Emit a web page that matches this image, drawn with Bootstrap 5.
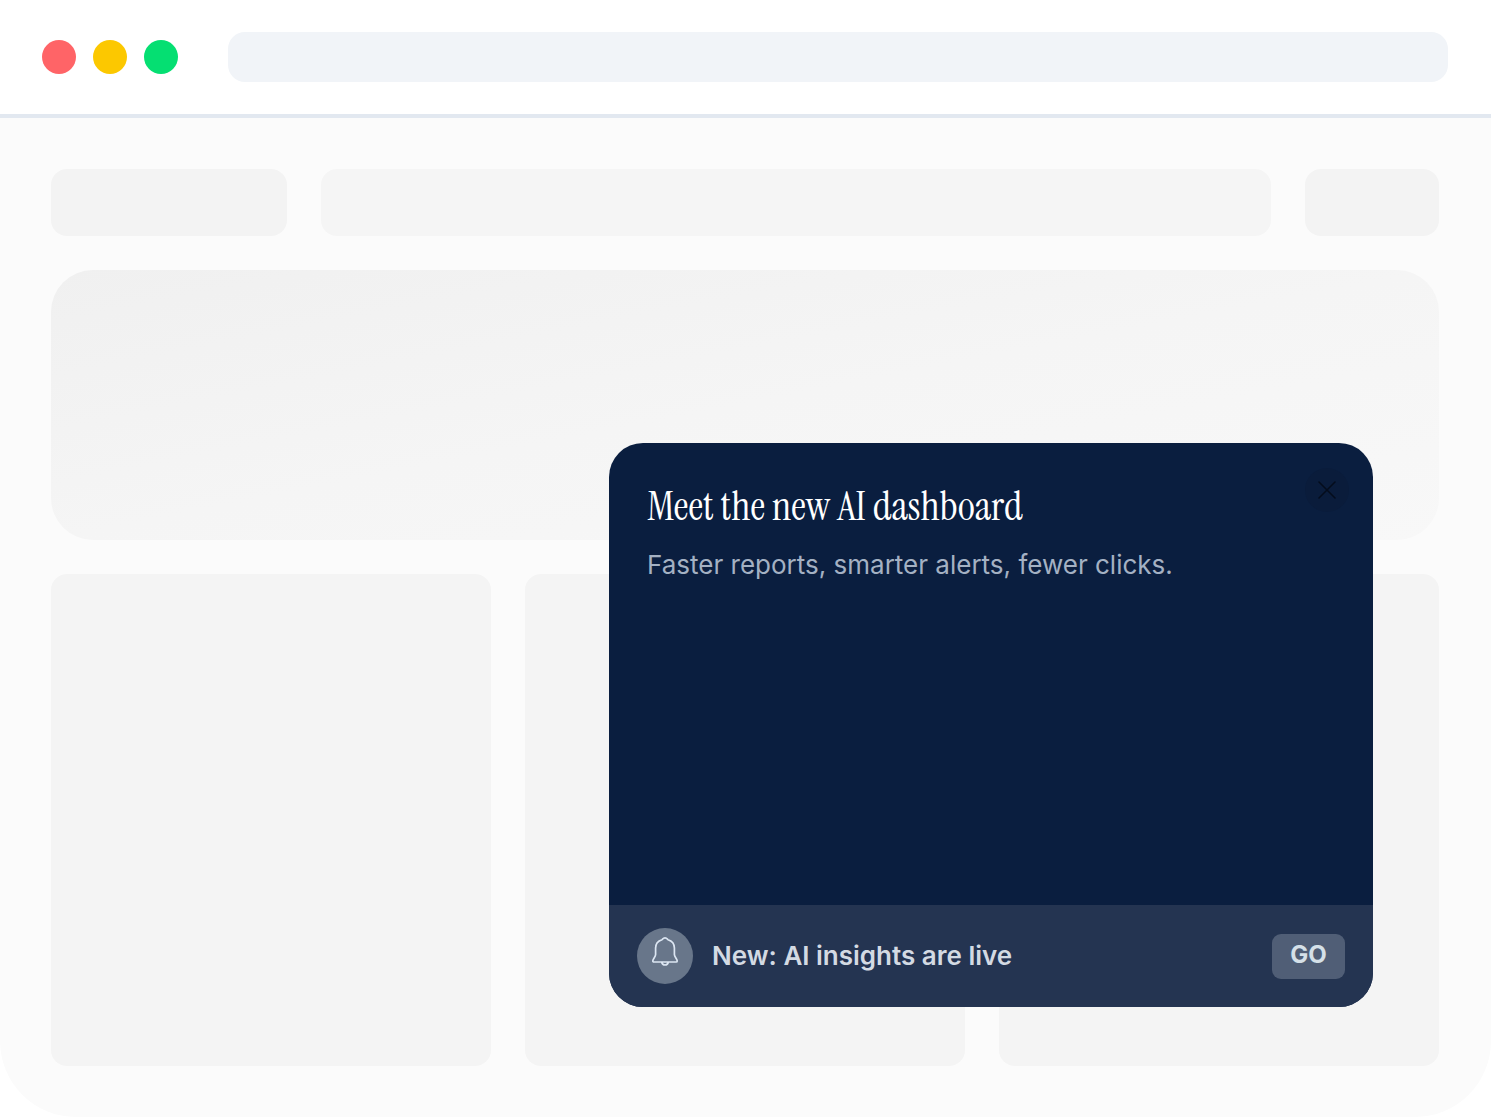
<!DOCTYPE html>
<html lang="en">
<head>
<meta charset="utf-8">
<meta name="viewport" content="width=device-width, initial-scale=1">
<title>AI dashboard announcement</title>
<link href="https://cdn.jsdelivr.net/npm/bootstrap@5.3.0/dist/css/bootstrap.min.css" rel="stylesheet">
<style>
body { font-family: Inter, "Liberation Sans", sans-serif; background: #fff; }
.browser { background: #fbfbfb; border-radius: 0 0 76px 76px; }
.browser-bar { background: #fff; border-bottom: 4px solid #e2e8f0; padding: 32px 43px 32px 42px; gap: 50px; }
.dots { gap: 17px; }
.dot { width: 34px; height: 34px; }
.dot-red { background: #ff6467; }
.dot-yellow { background: #fcc800; }
.dot-green { background: #05df72; }
.address { height: 50px; border: 0; border-radius: 17px; background: #f1f4f8; padding: 0 20px; outline-offset: 2px; }
.page-area { padding: 51px 52px 51px 51px; gap: 34px; }
.skeleton-row { gap: 34px; }
.block { border-radius: 16px; background: #f5f5f5; }
.block-bar { height: 67px; }
.block-logo { width: 236px; background: #f3f3f3; }
.block-action { width: 134px; background: #f3f3f3; }
.block-hero { height: 270px; border-radius: 42px; background: linear-gradient(to bottom right, #f0f0f0, #f5f5f5 50%, #f8f8f8); }
.block-tile { height: 492px; background: #f4f4f4; }
.popup { right: 118px; bottom: 110px; width: 764px; max-width: 90%; height: 564px; border-radius: 34px; background: #0a1e3f; }
.popup-head { padding: 25px 24px 0 38px; }
.popup-title { margin: 16px 0 0; font: 400 41px/44px "Instrument Serif", "Liberation Serif", serif; color: #fff; }
.popup-text { margin: 20px 0 0; font-size: 26px; line-height: 34px; color: #a4b1c3; }
.popup-close { width: 44px; height: 44px; background: #0a1c3b; color: #040c1c; border: 0; }
.popup-foot { background: #243451; padding: 0 28px; height: 102px; gap: 19px; }
.bell { width: 56px; height: 56px; background: #68768a; color: #dce6f2; padding-bottom: 8px; }
.foot-text { font-size: 26px; line-height: 32px; font-weight: 600; color: #d3dae3; }
.go { width: 73px; height: 45px; padding: 0 0 3px; border: 0; border-radius: 9px; background: #505e76; color: #d5e0e8; font-size: 24px; line-height: 32px; font-weight: 700; }
.go:hover { background: #61708a; color: #fff; }
</style>
<script src="https://cdn.jsdelivr.net/npm/bootstrap@5.3.0/dist/js/bootstrap.bundle.min.js"></script>
</head>
<body>
<div class="browser position-relative overflow-hidden">
  <header class="browser-bar d-flex align-items-center">
    <div class="dots d-flex flex-shrink-0">
      <span class="dot dot-red rounded-circle"></span>
      <span class="dot dot-yellow rounded-circle"></span>
      <span class="dot dot-green rounded-circle"></span>
    </div>
    <input class="address flex-grow-1 w-100" type="text" aria-label="Address">
  </header>
  <main class="page-area d-flex flex-column">
    <div class="skeleton-row d-flex">
      <div class="block block-bar block-logo flex-shrink-0"></div>
      <div class="block block-bar flex-grow-1"></div>
      <div class="block block-bar block-action flex-shrink-0"></div>
    </div>
    <div class="block block-hero"></div>
    <div class="skeleton-row d-flex">
      <div class="block block-tile flex-fill"></div>
      <div class="block block-tile flex-fill"></div>
      <div class="block block-tile flex-fill"></div>
    </div>
  </main>
  <section class="popup position-absolute d-flex flex-column overflow-hidden" aria-labelledby="popup-title">
    <div class="popup-head d-flex justify-content-between align-items-start flex-grow-1">
      <div>
        <h2 class="popup-title" id="popup-title">Meet the new AI dashboard</h2>
        <p class="popup-text">Faster reports, smarter alerts, fewer clicks.</p>
      </div>
      <button class="popup-close rounded-circle p-0 d-flex align-items-center justify-content-center" type="button" aria-label="Close">
        <svg width="18" height="18" viewBox="0 0 18 18" fill="none" stroke="currentColor" stroke-width="1.5" stroke-linecap="round"><path d="M1 1 17 17M17 1 1 17"/></svg>
      </button>
    </div>
    <div class="popup-foot d-flex align-items-center">
      <span class="bell rounded-circle d-flex align-items-center justify-content-center flex-shrink-0">
        <svg width="28" height="32" viewBox="0 0 28 32" fill="none" stroke="currentColor" stroke-width="1.7" stroke-linejoin="round" stroke-linecap="round"><path d="M11 3.700C11.800 3.300 11.900 1.800 14 1.800s2.200 1.500 3 1.900C21.300 5 23.400 8.200 23.400 12v6.400c0 2.600 2.800 4.300 2.800 6.500 0 .7-.4 1.100-1.100 1.100H2.900c-.7 0-1.100-.4-1.100-1.100 0-2.200 2.800-3.900 2.800-6.500V12C4.600 8.200 6.700 5 11 3.700ZM10.700 26.200c.4 1.800 1.600 2.800 3.300 2.800s2.900-1 3.300-2.800"/></svg>
      </span>
      <span class="foot-text">New: AI insights are live</span>
      <button class="go btn ms-auto" type="button">GO</button>
    </div>
  </section>
</div>
</body>
</html>
